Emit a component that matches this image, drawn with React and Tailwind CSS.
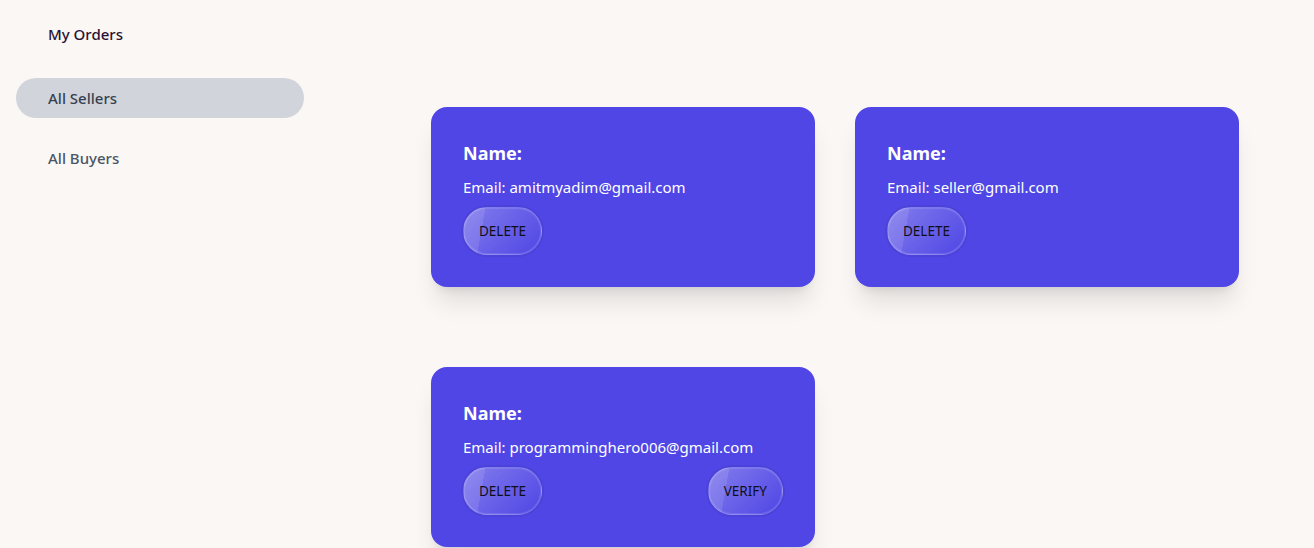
import React from 'react';

const sellers = [
  { _id: '1', name: '', email: 'amitmyadim@gmail.com', verify: false },
  { _id: '2', name: '', email: 'seller@gmail.com', verify: false },
  { _id: '3', name: '', email: 'programminghero006@gmail.com', verify: true },
];

const glassBtn =
  'h-12 px-[15px] rounded-full text-[13.5px] text-[#0f0f1a] uppercase border border-white/20 bg-[linear-gradient(135deg,rgba(255,255,255,0.3)_0%,rgba(0,0,0,0)_100%),linear-gradient(100deg,rgba(255,255,255,0.1)_25%,rgba(0,0,0,0)_25.1%)] shadow-[inset_0_0_0_1px_rgba(255,255,255,0.1),0_0_0_2px_rgba(0,0,0,0.05)]';

const App = () => {
  return (
    <div className="min-h-screen bg-[#faf7f5] flex font-['Noto_Sans','Open_Sans',sans-serif]">
      {/* Sidebar */}
      <aside className="w-[320px] shrink-0 px-4 pt-[14px]">
        <ul className="flex flex-col">
          <li className="h-10 flex items-center pl-8 rounded-full text-[15px] font-medium text-[#291334]">My Orders</li>
          <li className="h-10 mt-6 flex items-center pl-8 rounded-full bg-[#d1d5db] text-[15px] font-medium text-[#374151]">All Sellers</li>
          <li className="h-10 mt-5 flex items-center pl-8 rounded-full text-[15px] font-medium text-[#4b5563]">All Buyers</li>
        </ul>
      </aside>

      {/* Main Content */}
      <main className="flex-1 pl-[111px] pt-[107px]">
        <div className="grid grid-cols-[384px_384px] gap-x-10 gap-y-20">
          {sellers.map(seller => (
            <div key={seller._id} className="w-96 h-[180px] bg-[#4f46e5] rounded-2xl shadow-xl p-8 flex flex-col text-white">
              <h2 className="text-lg leading-7 font-bold">Name: {seller.name}</h2>
              <p className="mt-2 text-[15px] leading-6">Email: {seller.email}</p>
              <div className={`mt-2 flex ${seller.verify ? 'justify-between' : 'justify-start'}`}>
                <button className={glassBtn}>Delete</button>
                {seller.verify && <button className={glassBtn}>Verify</button>}
              </div>
            </div>
          ))}
        </div>
      </main>
    </div>
  );
};

export default App;
